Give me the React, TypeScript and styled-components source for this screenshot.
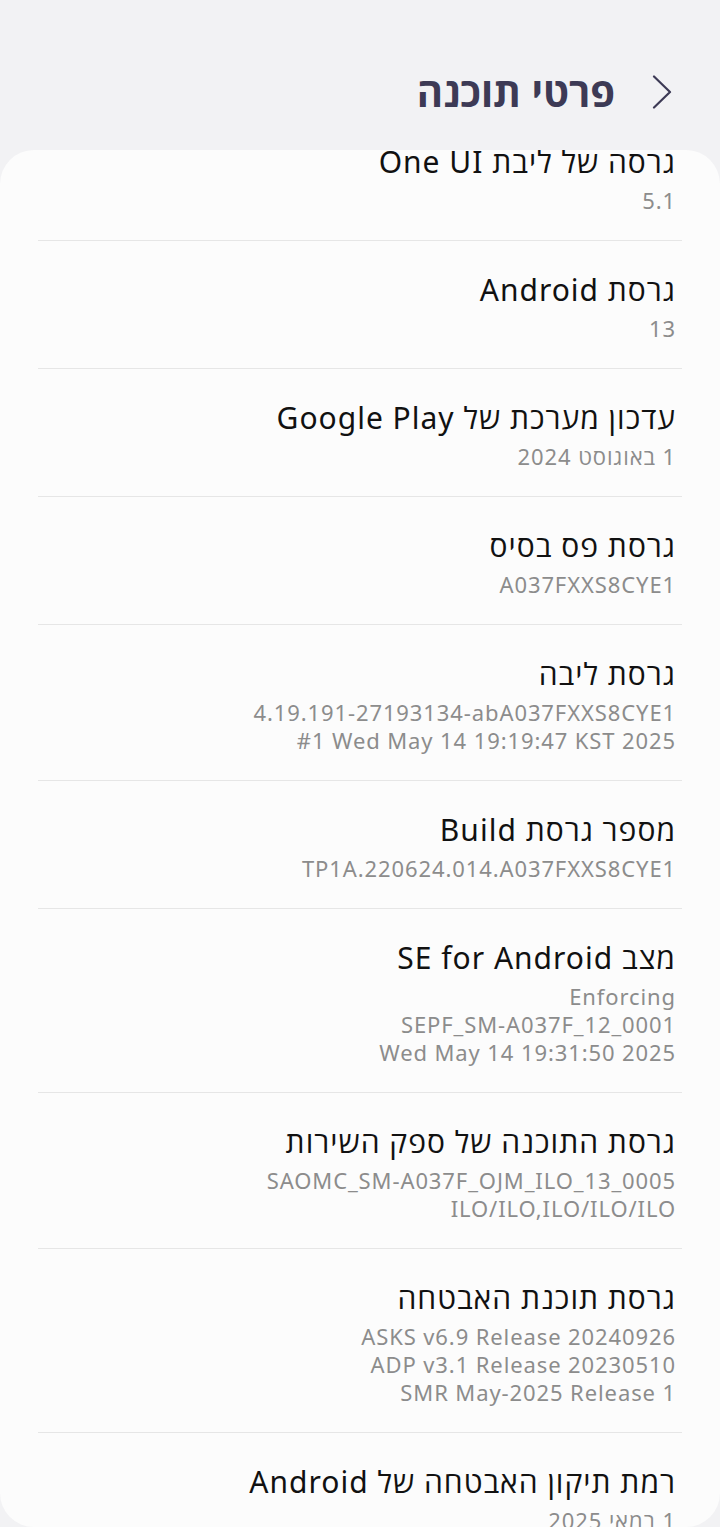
import React from 'react';
import styled, { createGlobalStyle } from 'styled-components';

const GlobalStyle = createGlobalStyle`
  html, body {
    margin: 0;
    padding: 0;
    background: #f2f2f4;
  }
  body {
    font-family: "Noto Sans", "Open Sans", "DejaVu Sans", sans-serif;
  }
`;

/** 整页容器 */
const Page = styled.div`
  width: 720px;
  height: 1527px;
  display: flex;
  flex-direction: column;
  background: #f2f2f4;
  direction: rtl;
  overflow: hidden;
`;

/** 顶部标题栏 */
const Header = styled.header`
  height: 150px;
  box-sizing: border-box;
  padding: 34px 48px 0 0;
  display: flex;
  align-items: center;
  gap: 37px;
  flex-shrink: 0;
`;

const BackButton = styled.button`
  width: 20px;
  height: 34px;
  padding: 0;
  border: none;
  background: none;
  display: flex;
  align-items: center;
  justify-content: center;
  color: #3d3a55;
`;

const Title = styled.h1`
  margin: 0;
  font-size: 40px;
  font-weight: 700;
  color: #3d3a55;
  line-height: 48px;
`;

/** 白色卡片 */
const Card = styled.section`
  flex: 1;
  background: #fcfcfc;
  border-radius: 34px;
  overflow: hidden;
`;

/** 已滚动的列表 */
const List = styled.ul`
  list-style: none;
  margin: -37px 0 0;
  padding: 0;
`;

const Row = styled.li<{ $last?: boolean }>`
  margin: 0 38px;
  padding: 31px 6px 26px;
  border-bottom: ${(p) => (p.$last ? 'none' : '1px solid #e6e6e6')};
`;

const RowTitle = styled.div`
  font-size: 30px;
  line-height: 36px;
  letter-spacing: 1px;
  color: #111111;
`;

const RowValue = styled.div`
  margin-top: 6px;
  font-size: 22px;
  line-height: 28px;
  letter-spacing: 0.9px;
  color: #8c8c8c;
`;

/** 每行按首个强字符决定方向（与 Android 一致），统一右对齐 */
const Line = styled.div`
  unicode-bidi: plaintext;
  text-align: right;
  white-space: nowrap;
`;

type Item = {
  title: string;
  value: string[];
};

const items: Item[] = [
  { title: 'גרסה של ליבת One UI', value: ['5.1'] },
  { title: 'גרסת Android', value: ['13'] },
  { title: 'עדכון מערכת של Google Play', value: ['1 באוגוסט 2024'] },
  { title: 'גרסת פס בסיס', value: ['A037FXXS8CYE1'] },
  {
    title: 'גרסת ליבה',
    value: ['4.19.191-27193134-abA037FXXS8CYE1', '#1 Wed May 14 19:19:47 KST 2025'],
  },
  { title: 'מספר גרסת Build', value: ['TP1A.220624.014.A037FXXS8CYE1'] },
  {
    title: 'מצב SE for Android',
    value: ['Enforcing', 'SEPF_SM-A037F_12_0001', 'Wed May 14 19:31:50 2025'],
  },
  {
    title: 'גרסת התוכנה של ספק השירות',
    value: ['SAOMC_SM-A037F_OJM_ILO_13_0005', 'ILO/ILO,ILO/ILO/ILO'],
  },
  {
    title: 'גרסת תוכנת האבטחה',
    value: [
      'ASKS v6.9 Release 20240926',
      'ADP v3.1 Release 20230510',
      'SMR May-2025 Release 1',
    ],
  },
  { title: 'רמת תיקון האבטחה של Android', value: ['1 במאי 2025'] },
];

const Chevron: React.FC = () => (
  <svg width="20" height="34" viewBox="0 0 20 34" fill="none">
    <polyline
      points="2,1.5 18,17 2,32.5"
      stroke="currentColor"
      strokeWidth="2.2"
      strokeLinecap="round"
      strokeLinejoin="round"
    />
  </svg>
);

const App: React.FC = () => (
  <>
    <GlobalStyle />
    <Page>
      <Header>
        <BackButton aria-label="חזרה">
          <Chevron />
        </BackButton>
        <Title>פרטי תוכנה</Title>
      </Header>
      <Card>
        <List>
          {items.map((item, i) => (
            <Row key={item.title} $last={i === items.length - 1}>
              <RowTitle>{item.title}</RowTitle>
              <RowValue>
                {item.value.map((line) => (
                  <Line key={line}>{line}</Line>
                ))}
              </RowValue>
            </Row>
          ))}
        </List>
      </Card>
    </Page>
  </>
);

export default App;
